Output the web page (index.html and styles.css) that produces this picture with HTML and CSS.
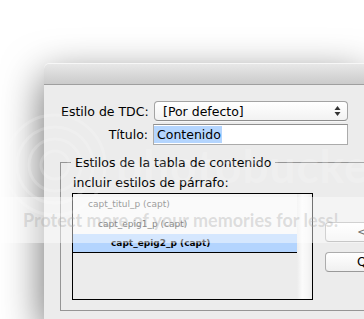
FILE: index.html
```html
<!DOCTYPE html>
<html lang="es">
<head>
<meta charset="utf-8">
<title>Tabla de contenido</title>
<link rel="stylesheet" href="styles.css">
</head>
<body>
<div class="stage">
  <div class="window">
    <div class="titlebar"></div>
    <div class="content">
      <div class="form">
        <label class="lbl">Estilo de TDC:</label>
        <div class="popup">
          <span>[Por defecto]</span>
          <svg class="arrows" width="7" height="12" viewBox="0 0 7 12"><path d="M3.5 1 L6.5 5 L0.5 5 Z M0.5 7 L6.5 7 L3.5 11 Z" fill="#333"/></svg>
        </div>
        <label class="lbl">Título:</label>
        <div class="field"><span class="sel">Contenido</span></div>
      </div>
      <fieldset class="group">
        <legend>Estilos de la tabla de contenido</legend>
        <div class="group-body">
          <div class="sub">incluir estilos de párrafo:</div>
          <div class="listrow">
            <div class="list">
              <div class="rows">
                <div class="row r1">capt_titul_p (capt)</div>
                <div class="row r2">capt_epig1_p (capt)</div>
                <div class="row r3">capt_epig2_p (capt)</div>
              </div>
              <div class="scroll"></div>
            </div>
            <div class="buttons">
              <div class="btn">&lt;&lt;</div>
              <div class="btn">Q</div>
            </div>
          </div>
        </div>
      </fieldset>
    </div>
  </div>
</div>
<div class="wm-logo">
  <svg class="wm-rings" width="110" height="110" viewBox="0 0 110 110">
    <g fill="none" stroke="#fff" stroke-width="3">
      <circle cx="55" cy="55" r="50"/>
      <circle cx="55" cy="55" r="38"/>
      <circle cx="55" cy="55" r="26"/>
      <circle cx="55" cy="55" r="14"/>
    </g>
  </svg>
  <span class="wm-name">photobucket</span>
</div>
<div class="wm-band"><span>Protect more of your memories for less!</span></div>
</body>
</html>
```
FILE: styles.css
```css
html, body {
  margin: 0;
  padding: 0;
}
body {
  width: 364px;
  height: 319px;
  overflow: hidden;
  background: #fff;
  position: relative;
  font-family: "DejaVu Sans", "Noto Sans", sans-serif;
  color: #000;
}
.stage {
  padding: 63px 0 0 44px;
}
.window {
  width: 320px;
  height: 256px;
  background: #ececec;
  border-radius: 5px 0 0 0;
  box-shadow: 0 14px 42px rgba(0, 0, 0, 0.6);
  overflow: hidden;
}
.titlebar {
  height: 21px;
  border-bottom: 1px solid #9f9f9f;
  border-radius: 5px 0 0 0;
  background: linear-gradient(#e9e9e9, #cbcbcb);
  box-shadow: inset 0 1px 0 #f7f7f7;
}
.content {
  padding: 16px 0 0 17px;
}
.form {
  display: grid;
  grid-template-columns: 87px 194px;
  grid-template-rows: 20px 21px;
  column-gap: 6px;
  row-gap: 3px;
  align-items: center;
  font-size: 12.5px;
}
.lbl {
  text-align: right;
  white-space: nowrap;
}
.popup {
  height: 20px;
  box-sizing: border-box;
  border: 1px solid #a3a3a3;
  border-bottom-color: #8e8e8e;
  border-radius: 4px;
  background: linear-gradient(#ffffff, #f2f2f2);
  display: flex;
  align-items: center;
  justify-content: space-between;
  padding: 0 6px 0 8px;
  box-shadow: 0 1px 0 rgba(255,255,255,0.6);
}
.arrows {
  display: block;
}
.field {
  height: 21px;
  width: 195px;
  margin-left: -1px;
  box-sizing: border-box;
  border: 1px solid #ababab;
  border-top-color: #8f8f8f;
  background: #fff;
  display: flex;
  align-items: center;
}
.sel {
  background: #b4d5fe;
  height: 17px;
  line-height: 17px;
  padding: 0 1px 0 3px;
}
.group {
  margin: 10px 0 0 -1px;
  padding: 0;
  border: 1px solid #959595;
  border-right: 0;
  min-width: 0;
  font-size: 12.5px;
}
.group legend {
  margin-left: 10px;
  padding: 0 4px;
  line-height: 15px;
  height: 15px;
}
.group-body {
  padding: 5px 0 10px 11px;
}
.sub {
  line-height: 15px;
  margin: 0 0 3px 1px;
}
.listrow {
  display: flex;
  gap: 12px;
  align-items: flex-start;
}
.list {
  width: 241px;
  height: 107px;
  flex: none;
  box-sizing: border-box;
  border: 1px solid #000;
  background: #ececec;
  display: grid;
  grid-template-columns: 1fr 15px;
}
.rows {
  align-self: start;
  border-bottom: 1px solid #000;
  background: #f6f6f6;
}
.row {
  height: 20px;
  line-height: 20px;
  font-size: 9px;
  white-space: nowrap;
}
.r1 {
  padding-left: 15px;
  color: #4a4a4a;
}
.r2 {
  padding-left: 25px;
  color: #1a1a1a;
}
.r3 {
  height: 18px;
  line-height: 18px;
  padding-left: 38px;
  font-weight: bold;
  background: #b3d4fe;
  color: #000;
}
.scroll {
  background: linear-gradient(90deg, #ececec, #fbfbfb 35%, #f6f6f6 70%, #ededed);
}
.buttons {
  flex: 1;
  min-width: 0;
  padding-top: 29px;
  display: flex;
  flex-direction: column;
  gap: 10px;
}
.btn {
  height: 20px;
  box-sizing: border-box;
  border: 1px solid #acacac;
  border-right: 0;
  border-bottom-color: #999;
  border-radius: 4px 0 0 4px;
  background: linear-gradient(#ffffff, #f0f0f0);
  padding-left: 31px;
  line-height: 18px;
  white-space: nowrap;
  overflow: hidden;
}
.wm-logo {
  position: absolute;
  left: 0;
  top: 110px;
  display: flex;
  align-items: center;
  gap: 6px;
  opacity: 0.18;
  pointer-events: none;
}
.wm-rings {
  display: block;
}
.wm-name {
  font-family: Lato, "DejaVu Sans", sans-serif;
  font-weight: bold;
  font-size: 46px;
  color: #fff;
  letter-spacing: 1px;
}
.wm-band {
  position: absolute;
  left: 0;
  top: 197px;
  width: 364px;
  height: 46px;
  background: rgba(255, 255, 255, 0.45);
  display: flex;
  align-items: center;
  padding-left: 23px;
  box-sizing: border-box;
}
.wm-band span {
  font-family: Lato, "DejaVu Sans", sans-serif;
  font-weight: bold;
  font-size: 18px;
  color: rgba(160, 160, 160, 0.32);
  white-space: nowrap;
}
```
